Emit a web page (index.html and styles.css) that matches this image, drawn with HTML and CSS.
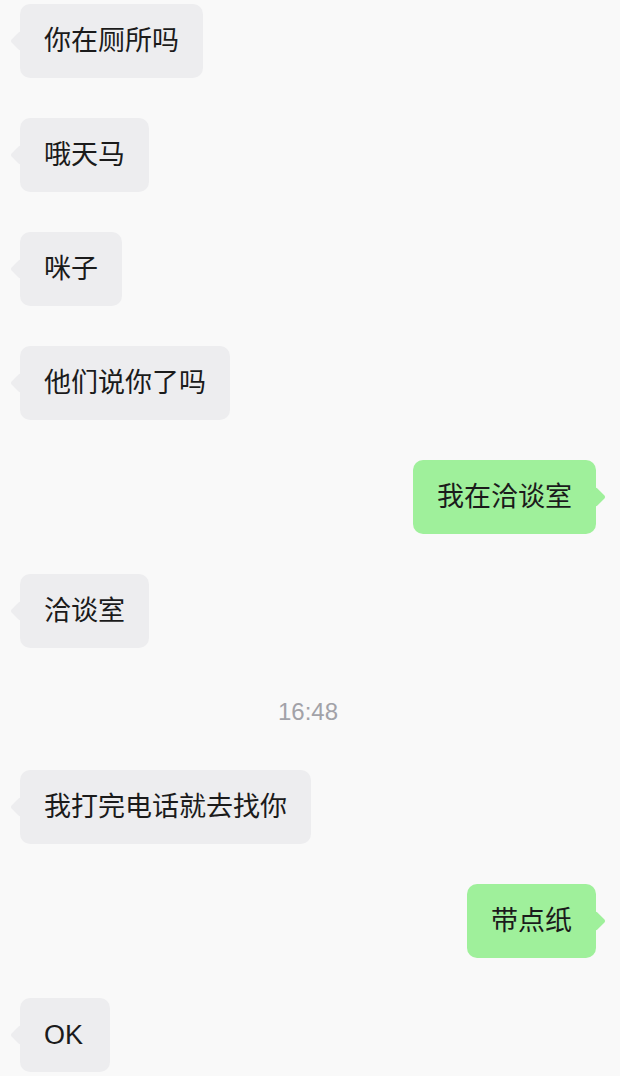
FILE: index.html
```html
<!DOCTYPE html>
<html lang="zh-CN">
<head>
  <meta charset="UTF-8" />
  <meta name="viewport" content="width=device-width, initial-scale=1.0" />
  <title>聊天</title>
  <link rel="stylesheet" href="styles.css">
</head>
<body>
  <div class="chat">
    <div class="row left"><div class="bubble">你在厕所吗</div></div>
    <div class="row left"><div class="bubble">哦天马</div></div>
    <div class="row left"><div class="bubble">咪子</div></div>
    <div class="row left"><div class="bubble">他们说你了吗</div></div>
    <div class="row right"><div class="bubble">我在洽谈室</div></div>
    <div class="row left"><div class="bubble">洽谈室</div></div>
    <div class="time">16:48</div>
    <div class="row left"><div class="bubble">我打完电话就去找你</div></div>
    <div class="row right"><div class="bubble">带点纸</div></div>
    <div class="row left"><div class="bubble">OK</div></div>
  </div>
</body>
</html>
```

FILE: styles.css
```css
body {
  margin: 0;
  background: #f9f9f9;
  font-family: "Helvetica Neue", "Liberation Sans", "Noto Sans CJK SC", sans-serif;
  color: #1b1b1b;
}

.chat {
  display: flex;
  flex-direction: column;
  padding: 4px 24px 0 20px;
}

.row {
  display: flex;
  margin-bottom: 40px;
}

.row.right {
  justify-content: flex-end;
}

.bubble {
  position: relative;
  min-width: 42px;
  height: 74px;
  line-height: 74px;
  padding: 0 24px;
  font-size: 27px;
  border-radius: 10px;
  background: #ededef;
}

.bubble::before {
  content: "";
  position: absolute;
  top: 30px;
  width: 14px;
  height: 14px;
  border-radius: 2px;
  background: inherit;
  transform: rotate(45deg);
}

.left .bubble::before {
  left: -7px;
}

.right .bubble {
  background: #9ff09b;
}

.right .bubble::before {
  right: -7px;
}

.time {
  height: 48px;
  line-height: 48px;
  margin-bottom: 34px;
  text-align: center;
  font-size: 24px;
  color: #a2a2a8;
}
```
